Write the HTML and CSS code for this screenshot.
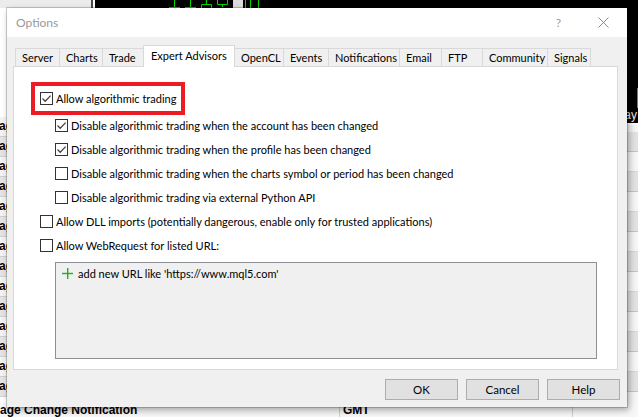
FILE: index.html
```html
<!doctype html>
<html>
<head>
<meta charset="utf-8">
<title>Options</title>
<link rel="stylesheet" href="styles.css">
</head>
<body>
<div class="desk">
  <div class="desk-upper">
    <div class="desk-left">
      <div class="menu-strip"></div>
      <div class="msg-list">
        <div class="msg-row">ag</div>
        <div class="msg-row">ag</div>
        <div class="msg-row">ag</div>
        <div class="msg-row">ag</div>
        <div class="msg-row">ag</div>
        <div class="msg-row">ag</div>
        <div class="msg-row">ag</div>
        <div class="msg-row">ag</div>
        <div class="msg-row">ag</div>
        <div class="msg-row">ag</div>
        <div class="msg-row">ag</div>
        <div class="msg-row">ag</div>
        <div class="msg-row">ag</div>
        <div class="msg-row">ag</div>
      </div>
    </div>
    <div class="desk-right">
      <div class="chart">
        <svg class="candles" width="543" height="108" viewBox="0 0 543 108">
          <g stroke="#00d400" stroke-width="1" fill="none">
            <path d="M79.5 0V7.5M74 7.5H85"/>
            <path d="M95.5 0V7.5M90 7.5H101"/>
            <path d="M111.5 0V4.5M106.5 4.5H116.5V9"/>
            <path d="M106.5 4.5V9"/>
            <path d="M122.5 0V4.5H132.5V0M127.5 4.5V7"/>
            <path d="M150.5 0V8M155.5 0V8M163.5 0V8"/>
            <path d="M542.5 88V108"/>
          </g>
          <rect x="138" y="0" width="10" height="8" fill="#dcdcdc"/>
        </svg>
      </div>
      <div class="chart-label">Friday</div>
      <div class="grid-rows"></div>
    </div>
  </div>
  <div class="desk-lower">
    <div class="cell cell-name">age Change Notification</div>
    <div class="cell cell-zone">GMT</div>
    <div class="cell cell-rest"></div>
  </div>
</div>

<div class="dialog">
  <div class="titlebar">
    <span class="title">Options</span>
    <span class="title-help">?</span>
    <svg class="title-close" width="11" height="11" viewBox="0 0 11 11">
      <path d="M0.5 0.5L10.5 10.5M10.5 0.5L0.5 10.5" stroke="#8a8a8a" stroke-width="1"/>
    </svg>
  </div>
  <div class="dialog-body">
    <div class="tabs">
      <div class="tab">Server</div>
      <div class="tab">Charts</div>
      <div class="tab">Trade</div>
      <div class="tab active">Expert Advisors</div>
      <div class="tab">OpenCL</div>
      <div class="tab">Events</div>
      <div class="tab">Notifications</div>
      <div class="tab">Email</div>
      <div class="tab">FTP</div>
      <div class="tab">Community</div>
      <div class="tab">Signals</div>
    </div>
    <div class="panel">
      <div class="highlight">
        <label class="check">
          <span class="box"><svg width="11" height="11" viewBox="0 0 11 11"><path d="M1.5 5.5L4.2 8.2L9.6 2.6" stroke="#454545" stroke-width="1.3" fill="none"/></svg></span>
          Allow algorithmic trading
        </label>
      </div>
      <div class="sub-options">
        <label class="check">
          <span class="box"><svg width="11" height="11" viewBox="0 0 11 11"><path d="M1.5 5.5L4.2 8.2L9.6 2.6" stroke="#454545" stroke-width="1.3" fill="none"/></svg></span>
          Disable algorithmic trading when the account has been changed
        </label>
        <label class="check">
          <span class="box"><svg width="11" height="11" viewBox="0 0 11 11"><path d="M1.5 5.5L4.2 8.2L9.6 2.6" stroke="#454545" stroke-width="1.3" fill="none"/></svg></span>
          Disable algorithmic trading when the profile has been changed
        </label>
        <label class="check">
          <span class="box"></span>
          Disable algorithmic trading when the charts symbol or period has been changed
        </label>
        <label class="check">
          <span class="box"></span>
          Disable algorithmic trading via external Python API
        </label>
      </div>
      <div class="main-options">
        <label class="check">
          <span class="box"></span>
          Allow DLL imports (potentially dangerous, enable only for trusted applications)
        </label>
        <label class="check">
          <span class="box"></span>
          Allow WebRequest for listed URL:
        </label>
      </div>
      <div class="url-list">
        <div class="url-add">
          <svg class="plus" width="11" height="11" viewBox="0 0 11 11">
            <rect x="5" y="0" width="1.4" height="11" fill="#1db51d"/>
            <rect x="0" y="4.8" width="11" height="1.4" fill="#1db51d"/>
          </svg>
          add new URL like 'https://www.mql5.com'
        </div>
      </div>
    </div>
    <div class="buttons">
      <button class="btn">OK</button>
      <button class="btn">Cancel</button>
      <button class="btn">Help</button>
    </div>
  </div>
</div>
</body>
</html>
```

FILE: styles.css
```css
html, body {
  margin: 0;
  padding: 0;
}

body {
  position: relative;
  width: 638px;
  height: 417px;
  overflow: hidden;
  background: #fff;
  font-family: Lato, "Open Sans", sans-serif;
  font-size: 11px;
  color: #000;
}

/* terminal window behind the dialog */
.desk {
  display: flex;
  flex-direction: column;
  height: 417px;
}
.desk-upper {
  flex: 1;
  display: flex;
  min-height: 0;
}
.desk-left {
  width: 93px;
  display: flex;
  flex-direction: column;
}
.menu-strip {
  height: 8px;
  background: #ececec;
  border-right: 2px solid #4a4a4a;
  box-sizing: border-box;
}
.msg-list {
  flex: 1;
  overflow: hidden;
  background: #fff;
  padding-top: 109px;
}
.msg-row {
  height: 20px;
  line-height: 19px;
  box-sizing: border-box;
  border-bottom: 1px solid #d0d0d0;
  font-family: "Liberation Sans", sans-serif;
  font-weight: bold;
  font-size: 12px;
  text-indent: -1px;
  white-space: nowrap;
  overflow: hidden;
  background: #f3f3f3;
}
.msg-row:nth-child(even) {
  background: #e4e4e4;
}
.desk-right {
  flex: 1;
  display: flex;
  flex-direction: column;
  border-left: 2px solid #fff;
}
.chart {
  height: 108px;
  background: #000;
}
.candles {
  display: block;
}
.chart-label {
  height: 15px;
  line-height: 14px;
  background: #000;
  color: #e8e8e8;
  text-align: right;
  padding-right: 1px;
  font-family: "Liberation Sans", sans-serif;
  font-size: 12px;
  border-bottom: 2px solid #fff;
}
.grid-rows {
  flex: 1;
  background: repeating-linear-gradient(to bottom,
    #e2e2e2 0, #e2e2e2 19px, #c4c4c4 19px, #c4c4c4 20px,
    #f6f6f6 20px, #f6f6f6 39px, #d6d6d6 39px, #d6d6d6 40px);
  background-position: 0 7px;
}
.desk-lower {
  height: 14px;
  display: flex;
  background: #f7f7f7;
  font-family: "Liberation Sans", sans-serif;
  font-weight: bold;
  font-size: 12px;
  line-height: 14px;
  white-space: nowrap;
}
.cell-name {
  width: 339px;
  border-right: 1px solid #cfcfcf;
  overflow: hidden;
}
.cell-zone {
  width: 229px;
  padding-left: 3px;
  border-right: 1px solid #cfcfcf;
}
.cell-rest {
  flex: 1;
}

/* Options dialog */
.dialog {
  position: absolute;
  left: 7px;
  top: 8px;
  width: 620px;
  height: 399px;
  display: flex;
  flex-direction: column;
  background: #f0f0f0;
  box-shadow: 0 0 0 1px rgba(0, 0, 0, .18), 2px 3px 7px rgba(0, 0, 0, .35);
}
.titlebar {
  height: 29px;
  flex: none;
  display: flex;
  align-items: center;
  background: #fff;
  color: #999;
  font-size: 12px;
}
.title {
  padding-left: 9px;
  flex: 1;
}
.title-help {
  margin-right: 37px;
  color: #9a9a9a;
}
.title-close {
  display: block;
  margin-right: 18px;
}
.dialog-body {
  flex: 1;
  display: flex;
  flex-direction: column;
  padding: 8px 7px 7px 6px;
}

.tabs {
  display: flex;
  align-items: flex-end;
  height: 21px;
  padding-left: 2px;
}
.tab {
  height: 18px;
  line-height: 17px;
  box-sizing: border-box;
  padding-left: 6px;
  border: 1px solid #d9d9d9;
  border-bottom: none;
  margin-right: -1px;
  background: #f0f0f0;
  white-space: nowrap;
  overflow: hidden;
}
.tab:nth-child(1) { width: 45px; }
.tab:nth-child(2) { width: 44px; }
.tab:nth-child(3) { width: 42px; }
.tab:nth-child(4) { width: 92px; }
.tab:nth-child(5) { width: 50px; }
.tab:nth-child(6) { width: 46px; }
.tab:nth-child(7) { width: 72px; }
.tab:nth-child(8) { width: 43px; }
.tab:nth-child(9) { width: 42px; }
.tab:nth-child(10) { width: 66px; }
.tab:nth-child(11) { width: 44px; }
.tab.active {
  position: relative;
  z-index: 1;
  height: 22px;
  line-height: 19px;
  margin-bottom: -1px;
  padding-left: 7px;
  background: #fff;
}

.panel {
  width: 605px;
  height: 304px;
  box-sizing: border-box;
  border: 1px solid #d9d9d9;
  background: #fff;
  padding-top: 15px;
}
.check {
  display: flex;
  align-items: center;
  height: 24px;
  white-space: nowrap;
}
.box {
  flex: none;
  display: flex;
  align-items: center;
  justify-content: center;
  width: 13px;
  height: 13px;
  box-sizing: border-box;
  border: 1px solid #333;
  background: #fff;
  margin-right: 3px;
}
.box svg {
  display: block;
}
.highlight {
  width: 154px;
  height: 33px;
  box-sizing: border-box;
  border: 4px solid #ed1c24;
  margin: 0 0 -2px 17px;
  padding-left: 5px;
}
.highlight .check {
  height: 25px;
}
.sub-options {
  padding-left: 41px;
}
.main-options {
  padding-left: 26px;
}
.url-list {
  height: 97px;
  box-sizing: border-box;
  margin: 5px 20px 0 41px;
  border: 1px solid #8c8f94;
  background: #f0f0f0;
}
.url-add {
  display: flex;
  align-items: center;
  height: 21px;
  padding-left: 6px;
}
.plus {
  display: block;
  margin-right: 5px;
}

.buttons {
  display: flex;
  justify-content: flex-end;
  gap: 8px;
  margin-top: 9px;
}
.btn {
  width: 73px;
  height: 21px;
  box-sizing: border-box;
  border: 1px solid #adadad;
  background: #e1e1e1;
  font-family: inherit;
  font-size: 11.5px;
  color: #000;
  padding: 0;
}
```
